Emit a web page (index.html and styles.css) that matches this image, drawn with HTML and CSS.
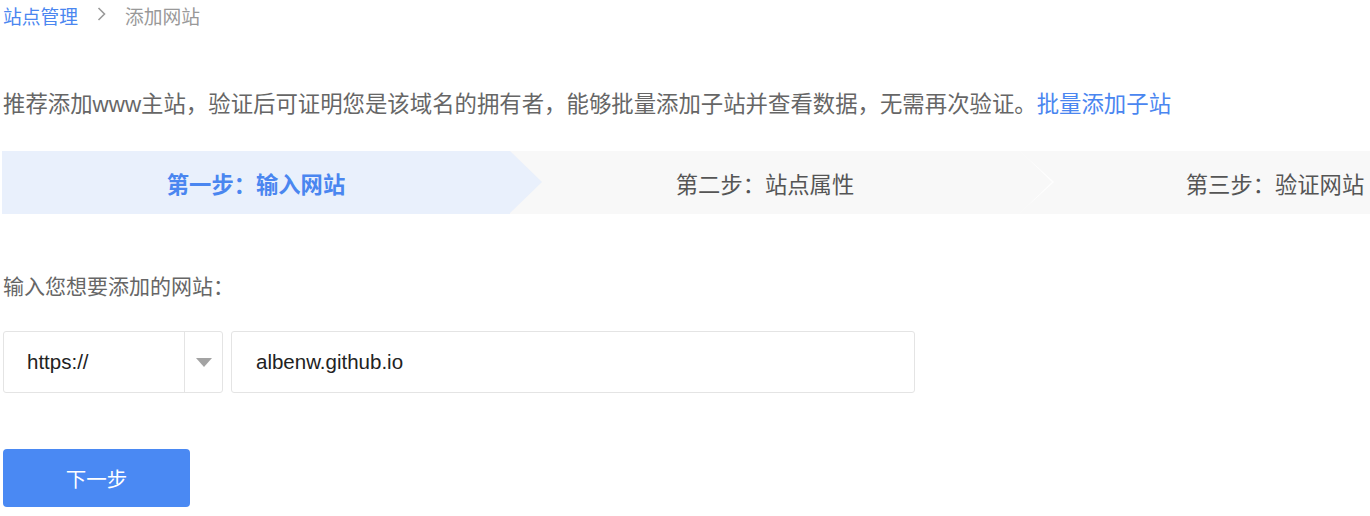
FILE: index.html
```html
<!DOCTYPE html>
<html lang="zh">
<head>
<meta charset="utf-8">
<link rel="stylesheet" href="styles.css">
</head>
<body>
<div class="page">
  <div class="crumb">
    <a class="crumb-link">站点管理</a>
    <span class="crumb-sep"><svg width="9" height="14" viewBox="0 0 9 14"><path d="M1.5 1 L7.5 7 L1.5 13" fill="none" stroke="#9a9a9a" stroke-width="1.6"/></svg></span>
    <span class="crumb-cur">添加网站</span>
  </div>
  <p class="desc">推荐添加www主站，验证后可证明您是该域名的拥有者，能够批量添加子站并查看数据，无需再次验证。<a class="link">批量添加子站</a></p>
  <div class="steps-wrap">
    <div class="steps">
      <div class="step step-active">第一步：输入网站</div>
      <div class="step step-mid">第二步：站点属性</div>
      <div class="step">第三步：验证网站</div>
    </div>
  </div>
  <div class="label">输入您想要添加的网站：</div>
  <div class="inputs">
    <div class="select">
      <span class="select-val">https://</span>
      <span class="select-arrow"><svg width="16" height="10" viewBox="0 0 16 10"><path d="M0 0 H16 L8 9 Z" fill="#a3a3a3"/></svg></span>
    </div>
    <div class="field">albenw.github.io</div>
  </div>
  <button class="btn">下一步</button>
</div>
</body>
</html>
```
FILE: styles.css
```css
html, body {
  margin: 0;
  padding: 0;
  background: #fff;
  overflow: hidden;
}
.page {
  width: 1368px;
  padding-left: 2px;
  font-family: "Liberation Sans", "Noto Sans CJK SC", sans-serif;
  color: #666;
}
.crumb {
  height: 30px;
  display: flex;
  align-items: center;
  font-size: 18.75px;
  padding-left: 1px;
}
.crumb-link { color: #4a86f0; }
.crumb-sep {
  display: flex;
  align-items: center;
  margin: 0 19px 0 19px;
  padding-bottom: 3px;
}
.crumb-cur { color: #999; }
.desc {
  margin: 59px 0 0 1px;
  height: 32px;
  line-height: 32px;
  font-size: 22.4px;
  color: #666;
  white-space: nowrap;
}
.link { color: #4a86f0; }
.steps-wrap {
  margin-top: 30px;
  width: 1368px;
  overflow: hidden;
}
.steps {
  display: flex;
  width: 1530px;
  height: 63px;
}
.step {
  position: relative;
  flex: 0 0 510px;
  display: flex;
  align-items: center;
  justify-content: center;
  background: #f8f8f8;
  font-size: 22.3px;
  color: #555;
}
.step-active {
  flex-basis: 508px;
  background: #e9f0fc;
  color: #4a86f0;
  font-weight: bold;
  z-index: 2;
}
.step-active::after {
  content: "";
  position: absolute;
  right: -32px;
  top: 0;
  border-left: 32px solid #e9f0fc;
  border-top: 31.5px solid transparent;
  border-bottom: 31.5px solid transparent;
}
.step-mid { z-index: 1; }
.step-mid::before {
  content: "";
  position: absolute;
  right: -34px;
  top: 0;
  border-left: 34px solid #fff;
  border-top: 31.5px solid transparent;
  border-bottom: 31.5px solid transparent;
}
.step-mid::after {
  content: "";
  position: absolute;
  right: -32px;
  top: 0;
  border-left: 32px solid #f8f8f8;
  border-top: 31.5px solid transparent;
  border-bottom: 31.5px solid transparent;
}
.label {
  margin: 58px 0 0 1px;
  font-size: 21px;
  height: 30px;
  line-height: 30px;
  color: #666;
}
.inputs {
  margin-top: 29px;
  margin-left: 1px;
  display: flex;
  gap: 8px;
  height: 62px;
}
.select {
  width: 218px;
  border: 1px solid #e4e4e4;
  border-radius: 3px;
  display: flex;
  align-items: stretch;
}
.select-val {
  flex: 1;
  display: flex;
  align-items: center;
  padding-left: 23px;
  font-size: 20.5px;
  color: #222;
  border-right: 1px solid #e4e4e4;
}
.select-arrow {
  width: 37px;
  display: flex;
  align-items: center;
  justify-content: center;
  padding-top: 1px;
}
.field {
  width: 658px;
  border: 1px solid #e4e4e4;
  border-radius: 3px;
  display: flex;
  align-items: center;
  padding-left: 24px;
  font-size: 20.5px;
  color: #222;
}
.btn {
  display: block;
  margin: 56px 0 0 1px;
  width: 187px;
  height: 58px;
  background: #4a89f3;
  border: none;
  border-radius: 4px;
  color: #fff;
  font-family: "Liberation Sans", "Noto Sans CJK SC", sans-serif;
  font-size: 20.5px;
}
```
